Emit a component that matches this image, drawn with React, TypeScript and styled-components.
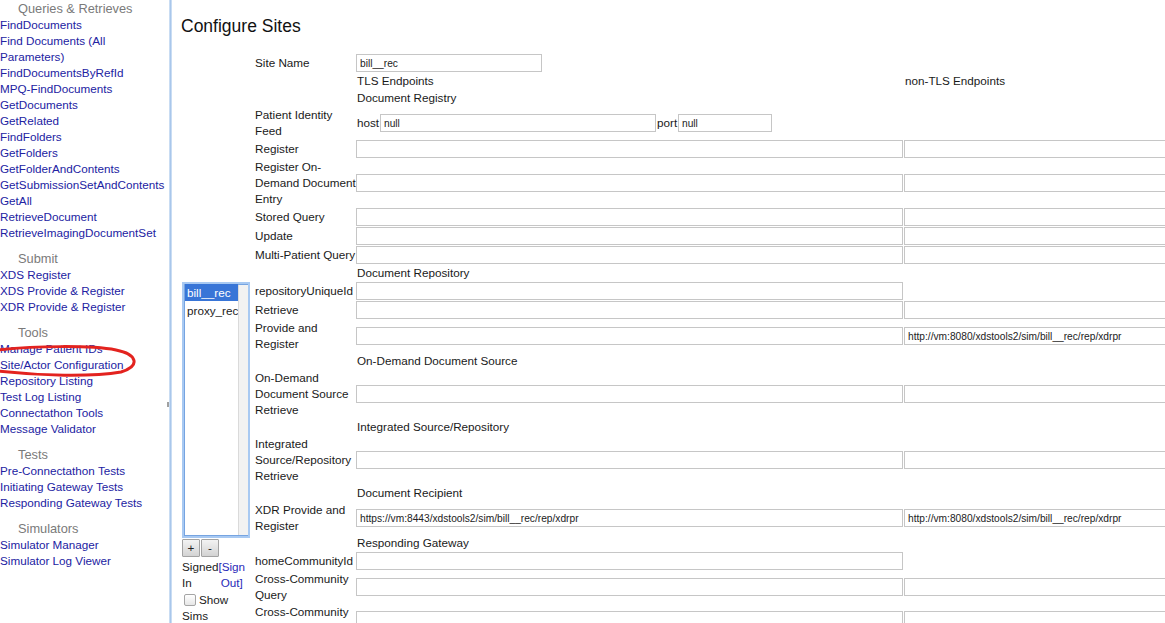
import React from "react";
import styled, { createGlobalStyle } from "styled-components";

const Global = createGlobalStyle`
  html, body { margin: 0; padding: 0; background: #fff; }
  body {
    font-family: "Liberation Sans", Arial, Helvetica, sans-serif;
    font-size: 11.7px;
    color: #222;
    overflow: hidden;
  }
`;

const Page = styled.div`
  display: flex;
  width: 1165px;
  height: 623px;
  overflow: hidden;
`;

/* ---------- left navigation ---------- */
const Nav = styled.nav`
  position: relative;
  flex: none;
  width: 169px;
  padding-top: 1px;
  overflow: hidden;
  line-height: 16px;
`;

const NavSection = styled.div`
  & + & {
    margin-top: 10px;
  }
`;

const NavHeader = styled.div`
  padding-left: 18px;
  font-size: 12.8px;
  color: #7a7a7a;
`;

const NavLink = styled.a`
  display: block;
  color: #2222a2;
  text-decoration: none;
  cursor: pointer;
`;

const Scribble = styled.svg`
  position: absolute;
  left: 0;
  top: 337px;
  pointer-events: none;
  overflow: visible;
`;

const Splitter = styled.div`
  flex: none;
  width: 3px;
  box-sizing: border-box;
  padding-top: 402px;
  background: linear-gradient(to right, #d9e7f7, #a9c7eb, #d9e7f7);
`;

const Grip = styled.div`
  width: 2px;
  height: 5px;
  margin-left: -2px;
  background: #a0a0a0;
`;

/* ---------- main ---------- */
const Main = styled.main`
  flex: 1;
  min-width: 0;
  overflow: hidden;
  padding: 16px 0 0 9px;
`;

const Title = styled.h2`
  margin: 0;
  font-size: 17.5px;
  line-height: 20px;
  font-weight: normal;
  color: #111;
`;

const Layout = styled.div`
  display: flex;
  align-items: flex-start;
  gap: 2px;
  margin-top: 18px;
`;

const SiteColumn = styled.div`
  flex: none;
  width: 71px;
  margin-left: 1px;
  padding-top: 228px;
  display: flex;
  flex-direction: column;
  line-height: 16px;
`;

const ListBox = styled.div`
  display: flex;
  width: 68px;
  height: 256px;
  box-sizing: border-box;
  border: 2px solid #a8c9f2;
  box-shadow: inset 0 0 0 1px #76a4e1;
  background: #fff;
`;

const ListItems = styled.div`
  flex: 1;
  padding: 0 0 0 1px;
`;

const ListItem = styled.div<{ $selected?: boolean }>`
  height: 17px;
  line-height: 17px;
  margin-bottom: 1px;
  padding-left: 2px;
  white-space: nowrap;
  overflow: hidden;
  background: ${(p) => (p.$selected ? "#3875d7" : "transparent")};
  color: ${(p) => (p.$selected ? "#fff" : "#222")};
`;

const ScrollTrack = styled.div`
  flex: none;
  width: 9px;
  margin: 1px 1px 1px 0;
  background: #f2f2f2;
  border-left: 1px solid #dadada;
`;

const ButtonRow = styled.div`
  display: flex;
  gap: 1px;
  margin-top: 1px;
`;

const SmallButton = styled.button`
  width: 18px;
  height: 18px;
  padding: 0;
  box-sizing: border-box;
  border: 1px solid #a3a3a3;
  border-radius: 1px;
  background: linear-gradient(#f3f3f3, #d3d3d3);
  font-family: inherit;
  font-size: 11.7px;
  line-height: 14px;
  color: #222;
`;

const SignRow = styled.div`
  display: flex;
  margin-top: 2px;
`;

const SignLink = styled.a`
  color: #2a2ab8;
  text-align: center;
  text-decoration: none;
`;

const ShowLabel = styled.label`
  display: block;
  margin-top: 1px;
`;

const Check = styled.input`
  appearance: none;
  width: 12px;
  height: 12px;
  margin: 0 3px 0 2px;
  box-sizing: border-box;
  vertical-align: -2px;
  border: 1px solid #a5a5a5;
  border-radius: 2px;
  background: linear-gradient(#ffffff, #e6e6e6);
`;

const Form = styled.div`
  flex: none;
  display: grid;
  grid-template-columns: 100px 547px 547px;
  column-gap: 1px;
  row-gap: 1px;
  align-items: center;
  line-height: 16px;
`;

const Label = styled.div`
  white-space: nowrap;
  color: #1a1a1a;
`;

const SectionText = styled.div`
  padding-left: 1px;
  white-space: nowrap;
  color: #1a1a1a;
`;

const TextBox = styled.input<{ $w?: number }>`
  display: block;
  width: ${(p) => (p.$w ? `${p.$w}px` : "100%")};
  height: 18px;
  box-sizing: border-box;
  margin: 0;
  padding: 0 3px;
  border: 1px solid #c6c6c6;
  border-radius: 0;
  background: #fff;
  font-family: "Liberation Sans", Arial, sans-serif;
  font-size: 10.2px;
  color: #222;
  outline: none;
`;

const HostCell = styled.div`
  display: flex;
  align-items: center;
`;

const InlineLabel = styled.span<{ $w: number }>`
  flex: none;
  width: ${(p) => p.$w}px;
  box-sizing: border-box;
  padding-left: 1px;
  color: #1a1a1a;
`;

const Empty = styled.div``;

/* ---------- data ---------- */
const navSections: { title: string; links: string[] }[] = [
  {
    title: "Queries & Retrieves",
    links: [
      "FindDocuments",
      "Find Documents (All Parameters)",
      "FindDocumentsByRefId",
      "MPQ-FindDocuments",
      "GetDocuments",
      "GetRelated",
      "FindFolders",
      "GetFolders",
      "GetFolderAndContents",
      "GetSubmissionSetAndContents",
      "GetAll",
      "RetrieveDocument",
      "RetrieveImagingDocumentSet",
    ],
  },
  { title: "Submit", links: ["XDS Register", "XDS Provide & Register", "XDR Provide & Register"] },
  {
    title: "Tools",
    links: [
      "Manage Patient IDs",
      "Site/Actor Configuration",
      "Repository Listing",
      "Test Log Listing",
      "Connectathon Tools",
      "Message Validator",
    ],
  },
  { title: "Tests", links: ["Pre-Connectathon Tests", "Initiating Gateway Tests", "Responding Gateway Tests"] },
  { title: "Simulators", links: ["Simulator Manager", "Simulator Log Viewer"] },
];

type FormRow =
  | { kind: "section"; text: string }
  | { kind: "field"; label: string[]; tls?: string; nonTls?: string | null };

const HTTP = "http://vm:8080/xdstools2/sim/bill__rec/rep/xdrpr";
const HTTPS = "https://vm:8443/xdstools2/sim/bill__rec/rep/xdrpr";

const rows: FormRow[] = [
  { kind: "field", label: ["Register"], tls: "", nonTls: "" },
  { kind: "field", label: ["Register On-", "Demand Document", "Entry"], tls: "", nonTls: "" },
  { kind: "field", label: ["Stored Query"], tls: "", nonTls: "" },
  { kind: "field", label: ["Update"], tls: "", nonTls: "" },
  { kind: "field", label: ["Multi-Patient Query"], tls: "", nonTls: "" },
  { kind: "section", text: "Document Repository" },
  { kind: "field", label: ["repositoryUniqueId"], tls: "", nonTls: null },
  { kind: "field", label: ["Retrieve"], tls: "", nonTls: "" },
  { kind: "field", label: ["Provide and", "Register"], tls: "", nonTls: HTTP },
  { kind: "section", text: "On-Demand Document Source" },
  { kind: "field", label: ["On-Demand", "Document Source", "Retrieve"], tls: "", nonTls: "" },
  { kind: "section", text: "Integrated Source/Repository" },
  { kind: "field", label: ["Integrated", "Source/Repository", "Retrieve"], tls: "", nonTls: "" },
  { kind: "section", text: "Document Recipient" },
  { kind: "field", label: ["XDR Provide and", "Register"], tls: HTTPS, nonTls: HTTP },
  { kind: "section", text: "Responding Gateway" },
  { kind: "field", label: ["homeCommunityId"], tls: "", nonTls: null },
  { kind: "field", label: ["Cross-Community", "Query"], tls: "", nonTls: "" },
  { kind: "field", label: ["Cross-Community", "Retrieve"], tls: "", nonTls: "" },
];

const Lines: React.FC<{ lines: string[] }> = ({ lines }) => (
  <>
    {lines.map((l, i) => (
      <React.Fragment key={i}>
        {i > 0 && <br />}
        {l}
      </React.Fragment>
    ))}
  </>
);

export default function App() {
  return (
    <>
      <Global />
      <Page>
        <Nav>
          {navSections.map((s) => (
            <NavSection key={s.title}>
              <NavHeader>{s.title}</NavHeader>
              {s.links.map((l) => (
                <NavLink key={l}>{l}</NavLink>
              ))}
            </NavSection>
          ))}
          <Scribble width="140" height="44" viewBox="0 0 140 44">
            <path
              d="M -3 13 C 35 9, 90 8, 116 13 C 137 17, 141 29, 121 35 C 92 40, 40 39, -3 34"
              fill="none"
              stroke="#e3231f"
              strokeWidth="3"
              strokeLinecap="round"
              strokeLinejoin="round"
            />
          </Scribble>
        </Nav>
        <Splitter>
          <Grip />
        </Splitter>
        <Main>
          <Title>Configure Sites</Title>
          <Layout>
            <SiteColumn>
              <ListBox>
                <ListItems>
                  <ListItem $selected>bill__rec</ListItem>
                  <ListItem>proxy_rec</ListItem>
                </ListItems>
                <ScrollTrack />
              </ListBox>
              <ButtonRow>
                <SmallButton>+</SmallButton>
                <SmallButton>-</SmallButton>
              </ButtonRow>
              <SignRow>
                <span>
                  Signed
                  <br />
                  In
                </span>
                <SignLink>
                  [Sign
                  <br />
                  Out]
                </SignLink>
              </SignRow>
              <ShowLabel>
                <Check type="checkbox" />
                Show
                <br />
                Sims
              </ShowLabel>
            </SiteColumn>

            <Form>
              <Label>Site Name</Label>
              <div>
                <TextBox $w={186} defaultValue="bill__rec" />
              </div>
              <Empty />

              <Empty />
              <SectionText>TLS Endpoints</SectionText>
              <SectionText>non-TLS Endpoints</SectionText>

              <Empty />
              <SectionText>Document Registry</SectionText>
              <Empty />

              <Label>
                <Lines lines={["Patient Identity", "Feed"]} />
              </Label>
              <HostCell>
                <InlineLabel $w={24}>host</InlineLabel>
                <TextBox $w={276} defaultValue="null" />
                <InlineLabel $w={22}>port</InlineLabel>
                <TextBox $w={94} defaultValue="null" />
              </HostCell>
              <Empty />

              {rows.map((r, i) =>
                r.kind === "section" ? (
                  <React.Fragment key={i}>
                    <Empty />
                    <SectionText>{r.text}</SectionText>
                    <Empty />
                  </React.Fragment>
                ) : (
                  <React.Fragment key={i}>
                    <Label>
                      <Lines lines={r.label} />
                    </Label>
                    <TextBox defaultValue={r.tls ?? ""} />
                    {r.nonTls === null ? <Empty /> : <TextBox defaultValue={r.nonTls ?? ""} />}
                  </React.Fragment>
                )
              )}
            </Form>
          </Layout>
        </Main>
      </Page>
    </>
  );
}
